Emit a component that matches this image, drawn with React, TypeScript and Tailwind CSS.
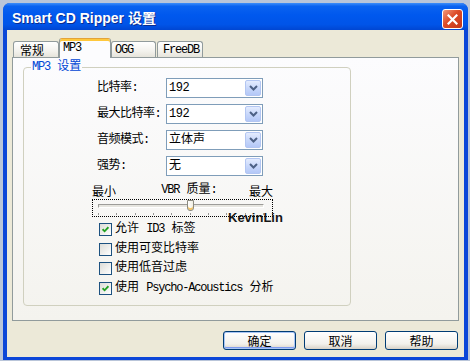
import React from "react";

const LAT = "font-['Liberation_Mono',monospace] text-[12px] tracking-[-1.2px]";

function Tab({ label, active, className }: { label: React.ReactNode; active?: boolean; className: string }) {
  if (active) {
    return (
      <div
        className={`relative z-10 -mb-[1px] flex h-[20px] items-start rounded-t-[3px] border-x border-t border-x-[#919B9C] border-t-[#E3A33A] bg-[#FCFCFE] pt-[2px] leading-[14px] shadow-[inset_0_2px_0_#FFC83C] ${className}`}
      >
        {label}
      </div>
    );
  }
  return (
    <div
      className={`flex h-[16px] items-center rounded-t-[3px] border-x border-t border-[#919B9C] bg-[linear-gradient(to_bottom,#FFFFFF,#F3F2ED_60%,#E6E4DB)] leading-[14px] ${className}`}
    >
      {label}
    </div>
  );
}

function Combo({ value }: { value: React.ReactNode }) {
  return (
    <div className="flex h-[20px] w-[97px] items-center border border-[#7F9DB9] bg-white">
      <span className="flex-1 pl-[2px] leading-[14px]">{value}</span>
      <span className="mr-[1px] flex h-[16px] w-[16px] items-center justify-center rounded-[2px] border border-[#B3C6F2] bg-[linear-gradient(to_bottom,#E4ECFE,#C6D6FA_55%,#B4C8F7)]">
        <svg width="9" height="6" viewBox="0 0 9 6">
          <path d="M1 1 L4.5 4.5 L8 1" stroke="#4D6185" strokeWidth="2" fill="none" />
        </svg>
      </span>
    </div>
  );
}

function Check({ checked, children }: { checked?: boolean; children: React.ReactNode }) {
  return (
    <div className="flex h-[19.5px] items-start">
      <span className="flex h-[13px] w-[13px] shrink-0 items-center justify-center border border-[#1C5180] bg-[linear-gradient(135deg,#DCDCD7,#FFFFFF)]">
        {checked && (
          <svg width="7" height="7" viewBox="0 0 7 7">
            <path d="M0.6 3.2 L2.6 5.3 L6.4 1.2" stroke="#21A121" strokeWidth="1.8" fill="none" />
          </svg>
        )}
      </span>
      <span className="ml-[3px] leading-[13px]">{children}</span>
    </div>
  );
}

function Btn({ children, primary }: { children: React.ReactNode; primary?: boolean }) {
  return (
    <button
      className={`flex h-[19px] w-[73px] items-center justify-center rounded-[3px] border border-[#003C74] bg-[linear-gradient(to_bottom,#FFFFFF,#F2F1EC_70%,#D8D2C7)] font-['Noto_Sans_CJK_SC',sans-serif] text-[12px] leading-[14px] ${
        primary ? "shadow-[inset_0_0_0_1px_#A9C6F5,inset_0_-1px_0_1px_#7F9BEF]" : ""
      }`}
    >
      {children}
    </button>
  );
}

export default function App() {
  const ticks = Array.from({ length: 10 });
  return (
    <div className="relative h-[361px] w-[470px] overflow-hidden bg-[#B9C5D9] pl-[3px] pt-[3px] font-['Liberation_Mono','Noto_Sans_CJK_SC',monospace] text-[12px] text-black">
      <div className="flex h-[357px] w-[465px] flex-col overflow-hidden rounded-t-[7px] bg-[#0B46D8]">
        {/* title bar */}
        <div className="flex h-[27px] shrink-0 items-start bg-[linear-gradient(to_bottom,#3D8EFA_0%,#0A62F0_12%,#0058EE_45%,#0054E8_80%,#0046D2_100%)]">
          <span className="ml-[9px] mt-[7px] font-['Liberation_Sans','Noto_Sans_CJK_SC',sans-serif] text-[14px] font-bold leading-[16px] text-white [text-shadow:1px_1px_0_#0A2C8F]">
            Smart CD Ripper 设置
          </span>
          <button className="ml-auto mr-[5px] mt-[6px] flex h-[20px] w-[21px] items-center justify-center rounded-[3px] border border-white bg-[linear-gradient(135deg,#F29A7C,#DC4A26_45%,#C2361A)]">
            <svg width="11" height="11" viewBox="0 0 11 11">
              <path d="M1.5 1.5 L9.5 9.5 M9.5 1.5 L1.5 9.5" stroke="white" strokeWidth="2.2" strokeLinecap="square" />
            </svg>
          </button>
        </div>

        {/* client */}
        <div className="mx-[4px] mb-[3px] flex flex-1 flex-col bg-[#ECE9D8]">
          <div className="ml-[6px] mt-[8px] flex h-[19px] items-end">
            <Tab className="w-[46px] pl-[6px] font-['Noto_Sans_CJK_SC',sans-serif]" label="常规" />
            <Tab active className="w-[52px] pl-[3px]" label={<span className={LAT}>MP3</span>} />
            <Tab className="w-[45px] pl-[3px]" label={<span className={LAT}>OGG</span>} />
            <Tab className="ml-[1px] w-[46px] pl-[5px]" label={<span className={LAT}>FreeDB</span>} />
          </div>

          <div className="ml-[5px] h-[264px] w-[447px] border border-[#919B9C] bg-[linear-gradient(to_bottom,#FCFCFE,#F4F3EE)]">
            <fieldset className="ml-[10px] mt-[2px] h-[246px] w-[328px] rounded-[4px] border border-[#D0D0BF] pt-[4px]">
              <legend className="ml-[7px] px-[1px] leading-[14px] text-[#0046D5]">
                <span className={LAT}>MP3</span> 设置
              </legend>

              <div className="flex flex-col gap-[6px] pl-[73px]">
                {[
                  ["比特率:", <span className="tracking-[-0.5px]">192</span>],
                  ["最大比特率:", <span className="tracking-[-0.5px]">192</span>],
                  ["音频模式:", "立体声"],
                  ["强势:", "无"],
                ].map(([label, value], i) => (
                  <div key={i} className="flex h-[20px] items-center">
                    <span className="w-[69px] leading-[14px] tracking-[-0.5px]">{label}</span>
                    <Combo value={value} />
                  </div>
                ))}
              </div>

              {/* VBR slider */}
              <div className="ml-[68px] mt-[8px] w-[181px]">
                <div className="flex h-[15px] justify-between">
                  <span className="self-end leading-[12px]">最小</span>
                  <span className="ml-[14px] self-start leading-[12px]">
                    <span className={LAT}>VBR</span> 质量:
                  </span>
                  <span className="self-end leading-[12px]">最大</span>
                </div>
                <div className="relative h-[18px] border border-dotted border-black">
                  <div className="absolute left-[5px] top-[4px] h-[4px] w-[166px] border border-[#9D9C99] border-b-white border-r-white bg-[#E6E5DF]" />
                  <div className="absolute left-[94px] top-0 h-[11px] w-[7px] rounded-b-[3px] border border-[#8C8B80] bg-[linear-gradient(to_right,#FFFFFF,#F1EFE2)] shadow-[inset_0_-2px_0_#F6C562]" />
                  <div className="absolute left-[5px] top-[13px] flex w-[166px] justify-between">
                    {ticks.map((_, i) => (
                      <span key={i} className="h-[2px] w-[1px] bg-[#9A9A9A]" />
                    ))}
                  </div>
                </div>
              </div>

              <div className="ml-[75px] mt-[6px] flex flex-col">
                <Check checked>
                  允许 <span className={LAT}>ID3</span> 标签
                </Check>
                <Check>使用可变比特率</Check>
                <Check>使用低音过虑</Check>
                <Check checked>
                  使用 <span className={LAT}>Psycho-Acoustics</span> 分析
                </Check>
              </div>
            </fieldset>
          </div>

          <div className="mr-[6px] mt-[10px] flex justify-end gap-[8px]">
            <Btn primary>确定</Btn>
            <Btn>取消</Btn>
            <Btn>帮助</Btn>
          </div>
        </div>
      </div>

      <span className="absolute left-[228px] top-[210px] font-['Liberation_Sans',sans-serif] text-[13px] font-bold leading-[16px] text-[#161616]">
        KevinLin
      </span>
    </div>
  );
}
